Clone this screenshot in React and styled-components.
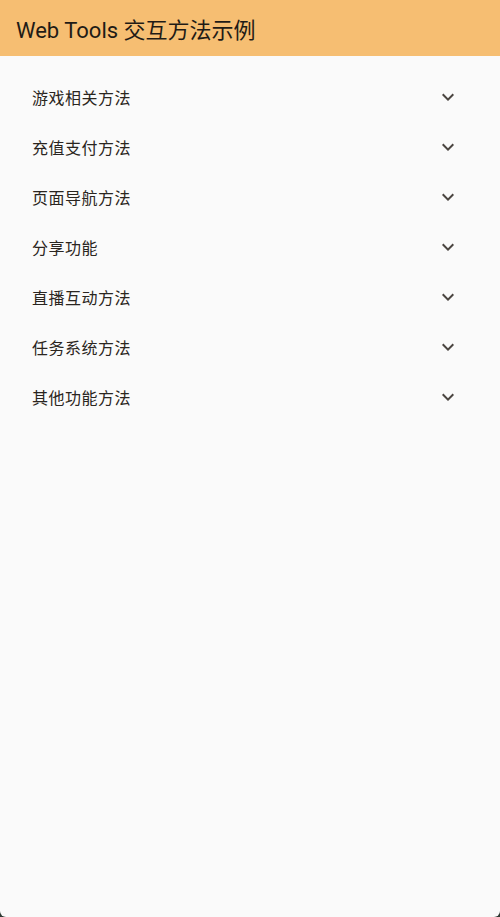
import React from "react";
import styled, { createGlobalStyle } from "styled-components";

const GlobalStyle = createGlobalStyle`
  html, body {
    margin: 0;
    padding: 0;
    background: #2f3a33;
  }
  body {
    font-family: Roboto, "Noto Sans CJK SC", sans-serif;
  }
`;

const Screen = styled.div`
  height: 917px;
  background: #fafafa;
  border-radius: 0 0 6px 6px;
  overflow: hidden;
  display: flex;
  flex-direction: column;
`;

const AppBar = styled.header`
  height: 56px;
  flex-shrink: 0;
  background: #f6be72;
  display: flex;
  align-items: center;
  padding: 0 16px;
  box-sizing: border-box;
`;

const Title = styled.h1`
  margin: 0;
  font-size: 22px;
  font-weight: 400;
  color: #1f1b16;
`;

const List = styled.div`
  padding: 16px 16px 0;
  display: flex;
  flex-direction: column;
`;

const Tile = styled.div`
  height: 50px;
  display: flex;
  align-items: center;
  justify-content: space-between;
  padding: 0 24px 0 16px;
  cursor: pointer;
`;

const Label = styled.span`
  font-size: 16px;
  color: #2a2520;
  letter-spacing: 0.5px;
`;

const Chevron = () => (
  <svg width="24" height="24" viewBox="0 0 24 24" fill="#4a4540">
    <path d="M7.41 8.59 12 13.17l4.59-4.58L18 10l-6 6-6-6 1.41-1.41z" />
  </svg>
);

const items = [
  "游戏相关方法",
  "充值支付方法",
  "页面导航方法",
  "分享功能",
  "直播互动方法",
  "任务系统方法",
  "其他功能方法",
];

export default function App() {
  return (
    <>
      <GlobalStyle />
      <Screen>
        <AppBar>
          <Title>Web Tools 交互方法示例</Title>
        </AppBar>
        <List>
          {items.map((t) => (
            <Tile key={t}>
              <Label>{t}</Label>
              <Chevron />
            </Tile>
          ))}
        </List>
      </Screen>
    </>
  );
}
